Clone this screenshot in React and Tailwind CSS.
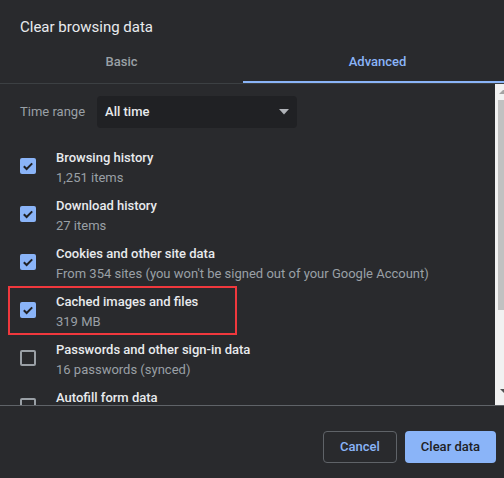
import React from "react";

const items = [
  { title: "Browsing history", sub: "1,251 items", checked: true },
  { title: "Download history", sub: "27 items", checked: true },
  { title: "Cookies and other site data", sub: "From 354 sites (you won't be signed out of your Google Account)", checked: true },
  { title: "Cached images and files", sub: "319 MB", checked: true },
  { title: "Passwords and other sign-in data", sub: "16 passwords (synced)", checked: false },
  { title: "Autofill form data", sub: "", checked: false },
];

function Checkbox({ checked }) {
  if (checked) {
    return (
      <div className="w-4 h-4 rounded-[2px] bg-[#8ab4f8] flex items-center justify-center shrink-0 mt-[10px]">
        <svg width="16" height="16" viewBox="0 0 16 16">
          <path d="M3.8 8.3 L6.6 11 L12.2 5.4" fill="none" stroke="#202124" strokeWidth="2" />
        </svg>
      </div>
    );
  }
  return <div className="w-4 h-4 rounded-[2px] border-2 border-[#9aa0a6] shrink-0 mt-[10px]" />;
}

export default function App() {
  return (
    <div className="w-[504px] h-[478px] bg-[#292a2d] flex flex-col overflow-hidden" style={{ fontFamily: "Roboto, 'Liberation Sans', sans-serif" }}>
      <div className="pt-[17px] pl-5 text-[15px] leading-[20px] text-[#e8eaed]">Clear browsing data</div>
      <div className="flex h-[47px] border-b border-[#3c4043] text-[13px] leading-[20px] font-medium">
        <div className="w-[243px] pt-[6px] flex items-center justify-center text-[#9aa0a6] border-b-2 border-transparent">Basic</div>
        <div className="flex-1 pt-[6px] pl-[8px] flex items-center justify-center text-[#8ab4f8] border-b-2 border-[#8ab4f8]">Advanced</div>
      </div>
      <div className="flex h-[321px] overflow-hidden">
        <div className="flex-1 relative pt-[12px]">
          <div className="flex items-center pl-5 gap-3">
            <span className="text-[13px] text-[#9aa0a6]">Time range</span>
            <div className="w-[200px] h-8 rounded bg-[#202124] flex items-center justify-between pl-2 pr-[8px] text-[13px] font-medium text-[#e8eaed]">
              <span>All time</span>
              <svg width="10" height="6" viewBox="0 0 10 6">
                <path d="M0 0 L10 0 L5 5.5 Z" fill="#b0b3b8" />
              </svg>
            </div>
          </div>
          <div className="flex flex-col gap-2 pt-5">
            {items.map((it) => (
              <div key={it.title} className="flex pl-5 gap-5 h-10">
                <Checkbox checked={it.checked} />
                <div className="flex flex-col">
                  <span className="text-[13px] leading-[20px] font-medium text-[#e8eaed]">{it.title}</span>
                  <span className="text-[13px] leading-[20px] text-[#9aa0a6]">{it.sub}</span>
                </div>
              </div>
            ))}
          </div>
          <div className="absolute left-[8px] top-[202px] w-[229px] h-[49px] border-2 border-[#f0383d]" />
        </div>
        <div className="w-[9px] bg-[#f1f1f1] flex flex-col">
          <div className="h-[16px] flex items-start pt-[6px] pl-[4px]">
            <svg width="5" height="5" viewBox="0 0 5 5"><path d="M0 4 L4 0 L5 0 L5 4 Z" fill="#a3a3a3" /></svg>
          </div>
          <div className="ml-[3px] h-[210px] bg-[#c1c1c1]" />
          <div className="flex-1" />
          <div className="h-[16px] flex items-start pt-[0px] pl-[5px]">
            <svg width="4" height="4" viewBox="0 0 4 4"><path d="M0 0 L4 0 L4 4 Z" fill="#505050" /></svg>
          </div>
        </div>
      </div>
      <div className="border-t border-[#5f6368] flex-1 flex justify-end items-start pt-[25px] pr-[8px] gap-2">
        <button className="h-8 w-[74px] rounded border border-[#5f6368] text-[#8ab4f8] text-[13px] font-medium flex items-center justify-center">Cancel</button>
        <button className="h-8 w-[91px] rounded bg-[#8ab4f8] text-[#202124] text-[13px] font-medium flex items-center justify-center">Clear data</button>
      </div>
    </div>
  );
}
